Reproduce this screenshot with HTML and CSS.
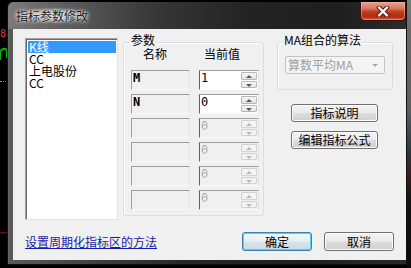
FILE: index.html
```html
<!DOCTYPE html>
<html lang="zh">
<head>
<meta charset="utf-8">
<title>指标参数修改</title>
<link rel="stylesheet" href="styles.css">
</head>
<body>
<div class="bg-chart">
  <span class="bg-num">8</span>
  <svg class="bg-line" width="8" height="16" viewBox="0 0 8 16"><path d="M0 14 L0 6 Q3 1 7 4 L7 12" fill="none" stroke="#00b000" stroke-width="2"/></svg>
  <span class="bg-dots"></span>
  <span class="bg-red"></span>
</div>
<div class="window">
  <div class="titlebar">
    <span class="title">指标参数修改</span>
    <button class="close" aria-label="关闭">
      <svg width="14" height="11" viewBox="0 0 14 11"><path d="M3 1.5 L11 9.5 M11 1.5 L3 9.5" stroke="#5a1a10" stroke-width="4.4" stroke-linecap="round"/><path d="M3 1.5 L11 9.5 M11 1.5 L3 9.5" stroke="#ffffff" stroke-width="2.4" stroke-linecap="round"/></svg>
    </button>
  </div>
  <div class="client">
    <div class="top">
      <ul class="list">
        <li class="sel">K线</li>
        <li>CC</li>
        <li>上电股份</li>
        <li>CC</li>
      </ul>
      <div class="group params">
        <span class="legend">参数</span>
        <div class="heads"><span class="h-name">名称</span><span class="h-val">当前值</span></div>
        <div class="rows">
          <div class="row"><div class="name">M</div><div class="val"><span class="num">1</span><span class="spin"><i class="up"></i><i class="down"></i></span></div></div>
          <div class="row"><div class="name">N</div><div class="val"><span class="num">0</span><span class="spin"><i class="up"></i><i class="down"></i></span></div></div>
          <div class="row off"><div class="name"></div><div class="val"><span class="num">0</span><span class="spin"><i class="up"></i><i class="down"></i></span></div></div>
          <div class="row off"><div class="name"></div><div class="val"><span class="num">0</span><span class="spin"><i class="up"></i><i class="down"></i></span></div></div>
          <div class="row off"><div class="name"></div><div class="val"><span class="num">0</span><span class="spin"><i class="up"></i><i class="down"></i></span></div></div>
          <div class="row off"><div class="name"></div><div class="val"><span class="num">0</span><span class="spin"><i class="up"></i><i class="down"></i></span></div></div>
        </div>
      </div>
      <div class="side">
        <div class="group algo">
          <span class="legend">MA组合的算法</span>
          <div class="combo"><span>算数平均MA</span><i class="caret"></i></div>
        </div>
        <button class="btn side-btn first">指标说明</button>
        <button class="btn side-btn">编辑指标公式</button>
      </div>
    </div>
    <div class="bottom">
      <a class="link" href="#">设置周期化指标区的方法</a>
      <div class="actions">
        <button class="btn ok">确定</button>
        <button class="btn">取消</button>
      </div>
    </div>
  </div>
</div>
</body>
</html>
```

FILE: styles.css
```css
* { box-sizing: border-box; }
html, body { margin: 0; padding: 0; }
body {
  width: 411px;
  height: 268px;
  overflow: hidden;
  position: relative;
  font-family: "Noto Sans CJK SC", "Noto Sans", sans-serif;
  font-size: 12px;
  color: #000;
  background:
    linear-gradient(#7c7c7c 0, #6a6a6a 30px, #5c5f62 110px, #2a3a3e 150px, #3a1e20 175px, #141414 200px, #0a0a0a 268px) right top / 4px 100% no-repeat,
    #000;
}

.bg-chart { position: absolute; left: 0; top: 0; width: 8px; height: 268px; }
.bg-num { position: absolute; left: 0; top: 28px; color: #e03535; font: 10px/12px "DejaVu Sans Mono", monospace; }
.bg-line { position: absolute; left: 0; top: 46px; }
.bg-dots { position: absolute; left: 0; top: 81px; width: 8px; border-top: 1px dotted #8a8a8a; }
.bg-red { position: absolute; left: 0; top: 232px; width: 8px; border-top: 1px solid #6a1010; }

.window {
  position: relative;
  margin: 2px 0 0 7px;
  width: 400px;
  height: 263px;
  border-radius: 6px 6px 0 0;
  border: 1px solid #101010;
  border-top: 0;
  background: linear-gradient(90deg, #5a5a5a 0, #3e3e3e 90px, #262626 180px, #1f1f1f 300px, #2a2a2a 400px);
  box-shadow: inset 1px 0 0 #6a6a6a;
  display: flex;
  flex-direction: column;
}

.titlebar {
  height: 27px;
  display: flex;
  align-items: flex-start;
  justify-content: space-between;
  background: linear-gradient(90deg, #7a7a7a 0, #5c5c5c 60px, #363636 150px, #232323 240px, #1f1f1f 330px, #2c2c2c 398px);
  border-radius: 6px 6px 0 0;
}
.title {
  margin: 6px 0 0 5px;
  line-height: 15px;
  font-size: 12px;
  color: #1c1c1c;
  padding: 0 3px;
  background: radial-gradient(ellipse at center, rgba(230,230,230,0.75) 30%, rgba(200,200,200,0) 75%);
  text-shadow: 0 0 4px #e6e6e6, 0 0 2px #eeeeee;
}
.close {
  width: 46px;
  height: 19px;
  margin: 0;
  padding: 0;
  border: 1px solid #3a0f08;
  border-top: 0;
  border-radius: 0 0 5px 5px;
  background: linear-gradient(#e4a08e 0, #d67a62 35%, #c23a20 55%, #b02c14 80%, #cf5a3a 100%);
  box-shadow: inset 0 0 0 1px rgba(255,200,180,0.45);
  display: flex;
  align-items: center;
  justify-content: center;
}

.client {
  margin-left: 5px;
  width: 393px;
  height: 231px;
  background: #f0f0f0;
  padding: 9px 12px 0 12px;
  display: flex;
  flex-direction: column;
}

.top { display: flex; align-items: flex-start; }

.list {
  margin: 0;
  padding: 2px 1px 0 2px;
  list-style: none;
  width: 93px;
  height: 182px;
  background: #fff;
  border: 1px solid #a0a0a0;
  border-right-color: #e3e3e3;
  border-bottom-color: #e3e3e3;
  box-shadow: inset 1px 1px 0 #696969;
}
.list li { line-height: 12px; height: 12px; padding-left: 1px; white-space: nowrap; font-size: 12px; }
.list li.sel { background: #3399ff; color: #fff; }

.group {
  position: relative;
  border: 1px solid #d5dfe5;
  border-radius: 3px;
  box-shadow: inset 1px 1px 0 #fff;
}
.legend {
  position: absolute;
  top: -10px;
  background: #f0f0f0;
  line-height: 14px;
  padding: 0 1px;
  white-space: nowrap;
}

.params { margin: 4px 0 0 5px; width: 141px; height: 174px; }
.params .legend { left: 6px; }
.heads { display: flex; margin-top: 4px; height: 14px; line-height: 14px; }
.h-name { margin-left: 19px; }
.h-val { margin-left: 37px; }
.rows { margin-top: 9px; padding-left: 7px; display: flex; flex-direction: column; gap: 4px; }
.row { display: flex; gap: 9px; height: 20px; }
.name {
  width: 59px;
  height: 20px;
  border-top: 1px solid #a0a0a0;
  border-left: 1px solid #a0a0a0;
  border-right: 1px solid #e3e3e3;
  border-bottom: 1px solid #f8f8f8;
  padding: 1px 0 0 1px;
  font: 12px/13px "DejaVu Sans Mono", "Noto Sans CJK SC", monospace;
  font-weight: bold;
}
.val {
  width: 60px;
  height: 20px;
  display: flex;
  justify-content: space-between;
  background: #fff;
  border-top: 1px solid #a0a0a0;
  border-left: 1px solid #646464;
  border-right: 1px solid #e3e3e3;
  border-bottom: 1px solid #f8f8f8;
  padding: 1px 1px 1px 0;
}
.num { font: 12px/13px "DejaVu Sans Mono", monospace; padding-left: 1px; }
.spin { width: 16px; display: flex; flex-direction: column; gap: 1px; }
.spin i {
  flex: 1;
  position: relative;
  border: 1px solid #b4b8be;
  border-radius: 1px;
  background: linear-gradient(#f6f6f6, #e4e4e4);
}
.spin i::after {
  content: "";
  position: absolute;
  left: 4px;
  top: 2px;
  border-left: 3px solid transparent;
  border-right: 3px solid transparent;
}
.spin .up::after { border-bottom: 3px solid #5a5a5a; }
.spin .down::after { border-top: 3px solid #5a5a5a; top: 2px; }
.row.off .val { background: #f0f0f0; }
.row.off .num { color: #a8a8a8; text-shadow: 1px 1px 0 #fff; }
.row.off .spin i { border-color: #cfd2d6; background: #f3f3f3; }
.row.off .spin .up::after { border-bottom-color: #b8b8b8; }
.row.off .spin .down::after { border-top-color: #b8b8b8; }

.side { margin: 4px 0 0 13px; width: 116px; display: flex; flex-direction: column; }
.algo { height: 48px; padding: 13px 0 0 7px; }
.algo .legend { left: 5px; }
.combo {
  width: 100px;
  height: 18px;
  border: 1px solid #c4c4c4;
  border-radius: 2px;
  background: #f4f4f4;
  color: #a0a0a0;
  display: flex;
  align-items: center;
  justify-content: space-between;
  padding: 0 6px 0 2px;
  line-height: 14px;
}
.caret { width: 0; height: 0; border-left: 3px solid transparent; border-right: 3px solid transparent; border-top: 3px solid #a8a8a8; }

.btn {
  font-family: "Noto Sans CJK SC", sans-serif;
  font-size: 12px;
  line-height: 14px;
  color: #000;
  height: 19px;
  padding: 0;
  border: 1px solid #707070;
  border-radius: 3px;
  background: linear-gradient(#f2f2f2 0, #ebebeb 48%, #dddddd 52%, #cfcfcf 100%);
  box-shadow: inset 0 0 0 1px #fcfcfc;
}
.side-btn { width: 87px; height: 18px; margin-left: 14px; margin-top: 9px; }
.side-btn.first { margin-top: 14px; }

.bottom { margin-top: 12px; display: flex; align-items: center; justify-content: space-between; }
.link { color: #1a1aa8; text-decoration: underline; line-height: 14px; padding-top: 1px; }
.actions { display: flex; gap: 12px; }
.actions .btn { width: 70px; }
.btn.ok {
  border-color: #3c7fb1;
  box-shadow: inset 0 0 0 1px #48d5fb;
  background: linear-gradient(#f0f6fa 0, #e8f0f5 48%, #d8e4ec 52%, #cbd9e3 100%);
}
```
